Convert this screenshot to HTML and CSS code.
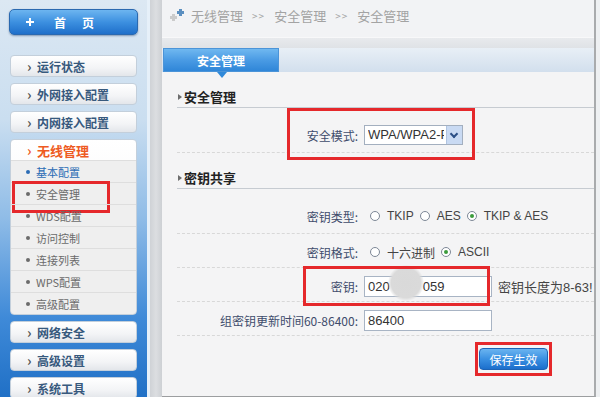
FILE: index.html
```html
<!DOCTYPE html>
<html lang="zh-CN">

<head>
    <meta charset="UTF-8">
    <meta name="viewport" content="width=device-width, initial-scale=1.0">
    <title>安全管理</title>
    <link rel="stylesheet" href="styles.css">
</head>

<body>
    <div class="page">
        <div class="side">
            <a href="javascript:;" class="home"><span class="home_plus"></span><span class="home_txt">首页</span></a>
            <ul class="menu">
                <li class="menu_item">运行状态</li>
                <li class="menu_item">外网接入配置</li>
                <li class="menu_item">内网接入配置</li>
                <li class="menu_group">
                    <div class="group_title">无线管理</div>
                    <ul class="sub">
                        <li class="sub_on">基本配置</li>
                        <li class="sub_mark">安全管理</li>
                        <li>WDS配置</li>
                        <li>访问控制</li>
                        <li>连接列表</li>
                        <li>WPS配置</li>
                        <li>高级配置</li>
                    </ul>
                </li>
                <li class="menu_item">网络安全</li>
                <li class="menu_item">高级设置</li>
                <li class="menu_item">系统工具</li>
            </ul>
        </div>
        <div class="split"></div>
        <div class="main">
            <div class="crumb">
                <span class="crumb_ico"><i class="cross p1"></i><i class="cross p2"></i></span>
                <span>无线管理</span><span class="sep">&gt;&gt;</span><span>安全管理</span><span class="sep">&gt;&gt;</span><span>安全管理</span>
            </div>
            <div class="band"></div>
            <div class="tabs"><span class="tab">安全管理</span></div>
            <div class="content">
                <h3 class="sec">安全管理</h3>
                <div class="row first">
                    <label>安全模式:</label>
                    <div class="field">
                        <div class="select"><span class="select_txt">WPA/WPA2-PSK</span><span class="select_arr"></span></div>
                    </div>
                    <span class="mark mark_mode"></span>
                </div>

                <h3 class="sec">密钥共享</h3>
                <div class="row first">
                    <label>密钥类型:</label>
                    <div class="field">
                        <span class="radio"></span><span class="opt">TKIP</span>
                        <span class="radio"></span><span class="opt">AES</span>
                        <span class="radio checked"></span><span class="opt">TKIP &amp; AES</span>
                    </div>
                </div>
                <div class="row">
                    <label>密钥格式:</label>
                    <div class="field">
                        <span class="radio"></span><span class="opt">十六进制</span>
                        <span class="radio checked"></span><span class="opt">ASCII</span>
                    </div>
                </div>
                <div class="row">
                    <label>密钥:</label>
                    <div class="field">
                        <div class="input key_input">020<span class="blur"></span><span class="key_tail">059</span></div>
                        <span class="hint">密钥长度为8-63!</span>
                    </div>
                    <span class="mark mark_key"></span>
                </div>
                <div class="row">
                    <label>组密钥更新时间60-86400:</label>
                    <div class="field">
                        <div class="input">86400</div>
                    </div>
                </div>
                <div class="btn_row">
                    <button class="save">保存生效</button>
                </div>
            </div>
        </div>
    </div>
</body>

</html>
```
FILE: styles.css
```css
* {
    margin: 0;
    padding: 0;
    box-sizing: border-box;
}

body {
    font-family: "Noto Sans CJK SC", "Noto Sans", sans-serif;
    font-size: 12px;
    background-color: #eef0f2;
}

ul {
    list-style: none;
}

i {
    font-style: normal;
}

.page {
    display: flex;
    width: 600px;
    height: 397px;
    overflow: hidden;
}

/* 左侧菜单 */
.side {
    flex-shrink: 0;
    width: 150px;
    padding: 9px 9px 0 9px;
    border-right: 3px solid #e6f0f9;
    background: linear-gradient(to bottom, #dce8f3 0%, #cadef0 30%, #8fbce7 55%, #3f8ad8 80%, #2070c6 100%);
}

.home {
    display: flex;
    align-items: center;
    height: 26px;
    border: 1px solid #2a69b0;
    border-radius: 5px;
    background: linear-gradient(to bottom, #6db5f0 0%, #3d90e0 50%, #1f6fca 100%);
    color: #fff;
    text-decoration: none;
    font-weight: bold;
    box-shadow: 0 1px 2px rgba(0, 40, 90, 0.4);
}

.home_plus {
    position: relative;
    width: 8px;
    height: 8px;
    margin-left: 16px;
}

.home_plus::before,
.home_plus::after,
.cross::before,
.cross::after {
    content: "";
    position: absolute;
    background-color: currentColor;
}

.home_plus::before {
    left: 3px;
    top: 0;
    width: 2px;
    height: 8px;
}

.home_plus::after {
    left: 0;
    top: 3px;
    width: 8px;
    height: 2px;
}

.home_txt {
    margin-left: 20px;
    letter-spacing: 16px;
}

.menu {
    margin-top: 20px;
}

.menu_item,
.menu_group {
    margin: 0 1px 6px 1px;
    border: 1px solid #c3cfdb;
    border-radius: 4px;
    background: linear-gradient(to bottom, #ffffff 0%, #f3f4f6 60%, #e3e6ea 100%);
}

.menu_item {
    height: 22px;
    line-height: 20px;
    padding-left: 16px;
    font-weight: bold;
    color: #37597d;
}

.menu_item::before,
.group_title::before {
    content: "›";
    display: inline-block;
    width: 10px;
    font-size: 14px;
    color: #555;
}

.group_title {
    height: 20px;
    line-height: 20px;
    padding-left: 16px;
    font-weight: bold;
    font-size: 13px;
    color: #ee5a22;
}

.group_title::before {
    color: #ee5a22;
}

.sub {
    background-color: #efefef;
    border-radius: 0 0 4px 4px;
}

.sub li {
    position: relative;
    height: 22px;
    line-height: 22px;
    padding-left: 25px;
    font-size: 11px;
    color: #6b6b6b;
    border-top: 1px solid #dedede;
}

.sub li::before {
    content: "";
    position: absolute;
    left: 15px;
    top: 9px;
    width: 4px;
    height: 4px;
    border-radius: 50%;
    background-color: #6b6b6b;
}

.sub .sub_on {
    color: #2b6cb5;
}

.sub .sub_on::before {
    background-color: #2b6cb5;
}

.sub_mark::after {
    content: "";
    position: absolute;
    left: 1px;
    top: -2px;
    width: 92px;
    height: 26px;
    border: 3px solid #e5282b;
}

.split {
    flex-shrink: 0;
    width: 12px;
    background: linear-gradient(to right, #cfd2d6, #dcdee1 50%, #cdd0d4);
}

/* 主体 */
.main {
    flex-shrink: 0;
    width: 434px;
    border-right: 2px solid #a9abad;
    border-bottom: 1px solid #9c9ea0;
    background-color: #f4f4f5;
}

.crumb {
    display: flex;
    align-items: center;
    height: 37px;
    padding: 0 0 6px 8px;
    font-size: 13px;
    color: #a3a3a3;
    background-color: #f2f3f5;
}

.crumb_ico {
    position: relative;
    width: 19px;
    height: 16px;
    margin-right: 2px;
}

.cross {
    position: absolute;
    width: 7px;
    height: 7px;
}

.cross::before {
    left: 2px;
    top: 0;
    width: 3px;
    height: 7px;
}

.cross::after {
    left: 0;
    top: 2px;
    width: 7px;
    height: 3px;
}

.p1 {
    left: 0;
    top: 6px;
    color: #cbcbcb;
}

.p2 {
    left: 7px;
    top: 1px;
    color: #5b8fc0;
}

.sep {
    margin: 0 9px;
    font-size: 10px;
    letter-spacing: 1px;
}

.band {
    height: 11px;
    border-top: 1px solid #f8f8f9;
    background: linear-gradient(to bottom, #e8eaed, #dfe2e6);
}

.tabs {
    height: 24px;
    background: linear-gradient(to bottom, #e8eff6, #d2dfed);
}

.tab {
    position: relative;
    display: block;
    width: 116px;
    height: 24px;
    margin-left: 1px;
    line-height: 24px;
    text-align: center;
    font-weight: bold;
    color: #fff;
    border: 1px solid #4b94d8;
    background: linear-gradient(to bottom, #70b8f0 0%, #4a9be4 50%, #2f86d8 100%);
}

.tab::after {
    content: "";
    position: absolute;
    left: 53px;
    bottom: -7px;
    border-left: 5px solid transparent;
    border-right: 5px solid transparent;
    border-top: 6px solid #3089d9;
}

.content {
    padding-left: 15px;
}

.sec {
    position: relative;
    height: 36px;
    padding: 15px 0 0 7px;
    line-height: 20px;
    font-size: 13px;
    color: #222;
    border-bottom: 1px solid #c6cbd1;
}

.sec::before {
    content: "";
    position: absolute;
    left: 1px;
    top: 22px;
    border-top: 3px solid transparent;
    border-bottom: 3px solid transparent;
    border-left: 4px solid #6d6d6d;
}

.row {
    position: relative;
    display: grid;
    grid-template-columns: 181px 1fr;
    column-gap: 6px;
    align-items: center;
    padding: 8px 0 5px;
    border-bottom: 1px dashed #d8d8d8;
}

.row.first {
    padding-top: 17px;
    padding-bottom: 7px;
}

.row label {
    text-align: right;
    color: #3f4c6c;
}

.field {
    display: flex;
    align-items: center;
    height: 20px;
    font-family: "Liberation Sans", "Noto Sans CJK SC", sans-serif;
    color: #444;
}

.select {
    position: relative;
    width: 99px;
    height: 20px;
    padding-left: 3px;
    line-height: 18px;
    color: #333;
    border: 1px solid #a3afbf;
    background-color: #fff;
}

.select_txt {
    display: block;
    width: 76px;
    overflow: hidden;
    white-space: nowrap;
    font-size: 13px;
}

.select_arr {
    position: absolute;
    right: 0;
    top: 0;
    width: 16px;
    height: 18px;
    background-color: #c9daf3;
    border-left: 1px solid #b0c4e0;
}

.select_arr::after {
    content: "";
    position: absolute;
    left: 4px;
    top: 5px;
    width: 4px;
    height: 4px;
    border-right: 2px solid #2c4f86;
    border-bottom: 2px solid #2c4f86;
    transform: rotate(45deg);
}

.radio {
    position: relative;
    width: 10px;
    height: 10px;
    margin: 0 7px 0 6px;
    border: 1px solid #7d8796;
    border-radius: 50%;
    background-color: #fff;
}

.radio.checked::after {
    content: "";
    position: absolute;
    left: 2px;
    top: 2px;
    width: 4px;
    height: 4px;
    border-radius: 50%;
    background-color: #3c9b3c;
}

.input {
    position: relative;
    width: 128px;
    height: 21px;
    padding-left: 3px;
    line-height: 19px;
    font-size: 13px;
    color: #333;
    border: 1px solid #a8b4c4;
    background-color: #fff;
}

.key_tail {
    margin-left: 33px;
}

.blur {
    position: absolute;
    left: 23px;
    top: -12px;
    width: 36px;
    height: 36px;
    border-radius: 50%;
    background: radial-gradient(circle, #d9d9d9 0%, #dadada 58%, rgba(222, 222, 222, 0) 72%);
}

.hint {
    margin-left: 6px;
    font-size: 13px;
    white-space: nowrap;
}

.mark {
    position: absolute;
    border: 3px solid #e5282b;
}

.mark_mode {
    left: 110px;
    top: 0;
    width: 188px;
    height: 52px;
}

.mark_key {
    left: 126px;
    top: -2px;
    width: 187px;
    height: 40px;
}

.btn_row {
    display: flex;
    justify-content: flex-end;
    padding: 12px 46px 0 0;
}

.save {
    position: relative;
    width: 69px;
    height: 22px;
    font-family: "Noto Sans CJK SC", sans-serif;
    font-size: 12px;
    color: #fff;
    border: 1px solid #1d63b5;
    border-radius: 4px;
    background: linear-gradient(to bottom, #6ab4f0 0%, #3a90e2 50%, #1c6fcc 100%);
}

.save::after {
    content: "";
    position: absolute;
    top: -7px;
    left: -5px;
    right: -5px;
    bottom: -7px;
    border: 3px solid #e5282b;
}
```
